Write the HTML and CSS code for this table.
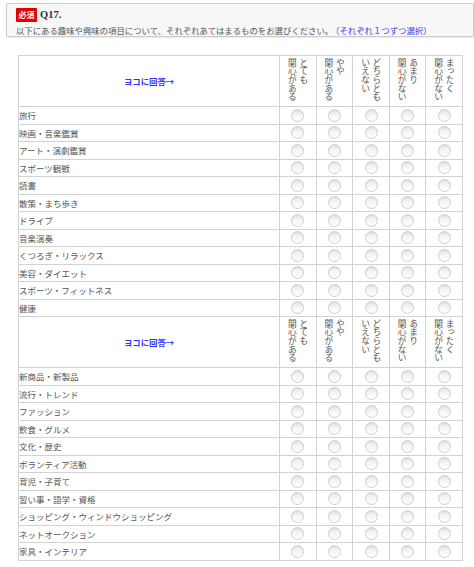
FILE: index.html
```html
<!DOCTYPE html>
<html lang="ja">
<head>
<meta charset="utf-8">
<title>Q17</title>
<link rel="stylesheet" href="styles.css">
</head>
<body>
<div class="qbox">
  <div class="qtitle"><span class="badge">必須</span><span class="qnum">Q17.</span></div>
  <div class="qtext">以下にある趣味や興味の項目について、それぞれあてはまるものをお選びください。<span class="qnote">（それぞれ１つずつ選択）</span></div>
</div>
<table class="grid">
  <tr class="head">
    <th class="yoko">ヨコに回答→</th>
    <th class="opt"><div class="vt">とても<br>関心がある</div></th>
    <th class="opt"><div class="vt">やや<br>関心がある</div></th>
    <th class="opt"><div class="vt">どちらとも<br>いえない</div></th>
    <th class="opt"><div class="vt">あまり<br>関心がない</div></th>
    <th class="opt"><div class="vt">まったく<br>関心がない</div></th>
  </tr>
  <tr><td class="lbl">旅行</td><td><span class="rd"></span></td><td><span class="rd"></span></td><td><span class="rd"></span></td><td><span class="rd"></span></td><td><span class="rd"></span></td></tr>
  <tr><td class="lbl">映画・音楽鑑賞</td><td><span class="rd"></span></td><td><span class="rd"></span></td><td><span class="rd"></span></td><td><span class="rd"></span></td><td><span class="rd"></span></td></tr>
  <tr><td class="lbl">アート・演劇鑑賞</td><td><span class="rd"></span></td><td><span class="rd"></span></td><td><span class="rd"></span></td><td><span class="rd"></span></td><td><span class="rd"></span></td></tr>
  <tr><td class="lbl">スポーツ観戦</td><td><span class="rd"></span></td><td><span class="rd"></span></td><td><span class="rd"></span></td><td><span class="rd"></span></td><td><span class="rd"></span></td></tr>
  <tr><td class="lbl">読書</td><td><span class="rd"></span></td><td><span class="rd"></span></td><td><span class="rd"></span></td><td><span class="rd"></span></td><td><span class="rd"></span></td></tr>
  <tr><td class="lbl">散策・まち歩き</td><td><span class="rd"></span></td><td><span class="rd"></span></td><td><span class="rd"></span></td><td><span class="rd"></span></td><td><span class="rd"></span></td></tr>
  <tr><td class="lbl">ドライブ</td><td><span class="rd"></span></td><td><span class="rd"></span></td><td><span class="rd"></span></td><td><span class="rd"></span></td><td><span class="rd"></span></td></tr>
  <tr><td class="lbl">音楽演奏</td><td><span class="rd"></span></td><td><span class="rd"></span></td><td><span class="rd"></span></td><td><span class="rd"></span></td><td><span class="rd"></span></td></tr>
  <tr><td class="lbl">くつろぎ・リラックス</td><td><span class="rd"></span></td><td><span class="rd"></span></td><td><span class="rd"></span></td><td><span class="rd"></span></td><td><span class="rd"></span></td></tr>
  <tr><td class="lbl">美容・ダイエット</td><td><span class="rd"></span></td><td><span class="rd"></span></td><td><span class="rd"></span></td><td><span class="rd"></span></td><td><span class="rd"></span></td></tr>
  <tr><td class="lbl">スポーツ・フィットネス</td><td><span class="rd"></span></td><td><span class="rd"></span></td><td><span class="rd"></span></td><td><span class="rd"></span></td><td><span class="rd"></span></td></tr>
  <tr><td class="lbl">健康</td><td><span class="rd"></span></td><td><span class="rd"></span></td><td><span class="rd"></span></td><td><span class="rd"></span></td><td><span class="rd"></span></td></tr>
  <tr class="head">
    <th class="yoko">ヨコに回答→</th>
    <th class="opt"><div class="vt">とても<br>関心がある</div></th>
    <th class="opt"><div class="vt">やや<br>関心がある</div></th>
    <th class="opt"><div class="vt">どちらとも<br>いえない</div></th>
    <th class="opt"><div class="vt">あまり<br>関心がない</div></th>
    <th class="opt"><div class="vt">まったく<br>関心がない</div></th>
  </tr>
  <tr><td class="lbl">新商品・新製品</td><td><span class="rd"></span></td><td><span class="rd"></span></td><td><span class="rd"></span></td><td><span class="rd"></span></td><td><span class="rd"></span></td></tr>
  <tr><td class="lbl">流行・トレンド</td><td><span class="rd"></span></td><td><span class="rd"></span></td><td><span class="rd"></span></td><td><span class="rd"></span></td><td><span class="rd"></span></td></tr>
  <tr><td class="lbl">ファッション</td><td><span class="rd"></span></td><td><span class="rd"></span></td><td><span class="rd"></span></td><td><span class="rd"></span></td><td><span class="rd"></span></td></tr>
  <tr><td class="lbl">飲食・グルメ</td><td><span class="rd"></span></td><td><span class="rd"></span></td><td><span class="rd"></span></td><td><span class="rd"></span></td><td><span class="rd"></span></td></tr>
  <tr><td class="lbl">文化・歴史</td><td><span class="rd"></span></td><td><span class="rd"></span></td><td><span class="rd"></span></td><td><span class="rd"></span></td><td><span class="rd"></span></td></tr>
  <tr><td class="lbl">ボランティア活動</td><td><span class="rd"></span></td><td><span class="rd"></span></td><td><span class="rd"></span></td><td><span class="rd"></span></td><td><span class="rd"></span></td></tr>
  <tr><td class="lbl">育児・子育て</td><td><span class="rd"></span></td><td><span class="rd"></span></td><td><span class="rd"></span></td><td><span class="rd"></span></td><td><span class="rd"></span></td></tr>
  <tr><td class="lbl">習い事・語学・資格</td><td><span class="rd"></span></td><td><span class="rd"></span></td><td><span class="rd"></span></td><td><span class="rd"></span></td><td><span class="rd"></span></td></tr>
  <tr><td class="lbl">ショッピング・ウィンドウショッピング</td><td><span class="rd"></span></td><td><span class="rd"></span></td><td><span class="rd"></span></td><td><span class="rd"></span></td><td><span class="rd"></span></td></tr>
  <tr><td class="lbl">ネットオークション</td><td><span class="rd"></span></td><td><span class="rd"></span></td><td><span class="rd"></span></td><td><span class="rd"></span></td><td><span class="rd"></span></td></tr>
  <tr><td class="lbl">家具・インテリア</td><td><span class="rd"></span></td><td><span class="rd"></span></td><td><span class="rd"></span></td><td><span class="rd"></span></td><td><span class="rd"></span></td></tr>
</table>
</body>
</html>
```

FILE: styles.css
```css
html, body {
  margin: 0;
  padding: 0;
  background: #ffffff;
}
body {
  font-family: "Noto Sans CJK JP", "Noto Sans", sans-serif;
  color: #555555;
  padding-top: 3px;
}
.qbox {
  box-sizing: border-box;
  margin-left: 6px;
  width: 468px;
  height: 34px;
  border: 1px solid #cccccc;
  border-radius: 2px;
  background: #f7f7f7;
  box-shadow: 0 1px 1px rgba(0, 0, 0, 0.08);
  padding: 4px 9px 0 9px;
}
.qtitle {
  display: flex;
  align-items: center;
  gap: 3px;
  height: 14px;
}
.badge {
  display: flex;
  align-items: center;
  justify-content: center;
  width: 21px;
  height: 14px;
  background: #e50000;
  color: #ffffff;
  font-size: 8px;
  font-weight: bold;
  line-height: 1;
  border-radius: 1px;
}
.qnum {
  font-family: "Liberation Serif", serif;
  font-weight: bold;
  font-size: 10.5px;
  color: #333333;
  line-height: 1;
}
.qtext {
  font-size: 8.4px;
  line-height: 12px;
  margin-top: 2px;
  color: #555555;
  white-space: nowrap;
}
.qnote {
  color: #3a3af0;
  margin-left: 2px;
}
.grid {
  margin: 18px 0 0 18px;
  width: 445px;
  border-collapse: collapse;
  table-layout: fixed;
}
.grid td, .grid th {
  border: 1px solid #d2d2d2;
  padding: 0;
}
.grid tr {
  height: 17.5px;
}
.grid tr.head {
  height: 51px;
}
.yoko {
  width: auto;
  color: #3333ff;
  font-size: 8.4px;
  font-weight: bold;
  text-align: center;
  vertical-align: middle;
}
.opt {
  width: 35.6px;
  vertical-align: top;
  font-weight: normal;
}
.vt {
  writing-mode: vertical-rl;
  font-size: 8.7px;
  line-height: 11.4px;
  color: #555555;
  margin: 2px auto 0 auto;
  text-align: start;
}
.lbl {
  font-size: 8.5px;
  color: #555555;
  padding-left: 3px;
  white-space: nowrap;
  vertical-align: middle;
}
.grid td {
  text-align: center;
  vertical-align: middle;
}
.grid td.lbl {
  text-align: left;
}
.rd {
  display: block;
  box-sizing: border-box;
  width: 13px;
  height: 13px;
  margin: 0 auto;
  border-radius: 50%;
  border: 1px solid #cfcfcf;
  background: linear-gradient(to bottom, #e6e6e6 0%, #f5f5f5 45%, #ffffff 100%);
  box-shadow: inset 0 1px 1px rgba(0, 0, 0, 0.06);
}
```
